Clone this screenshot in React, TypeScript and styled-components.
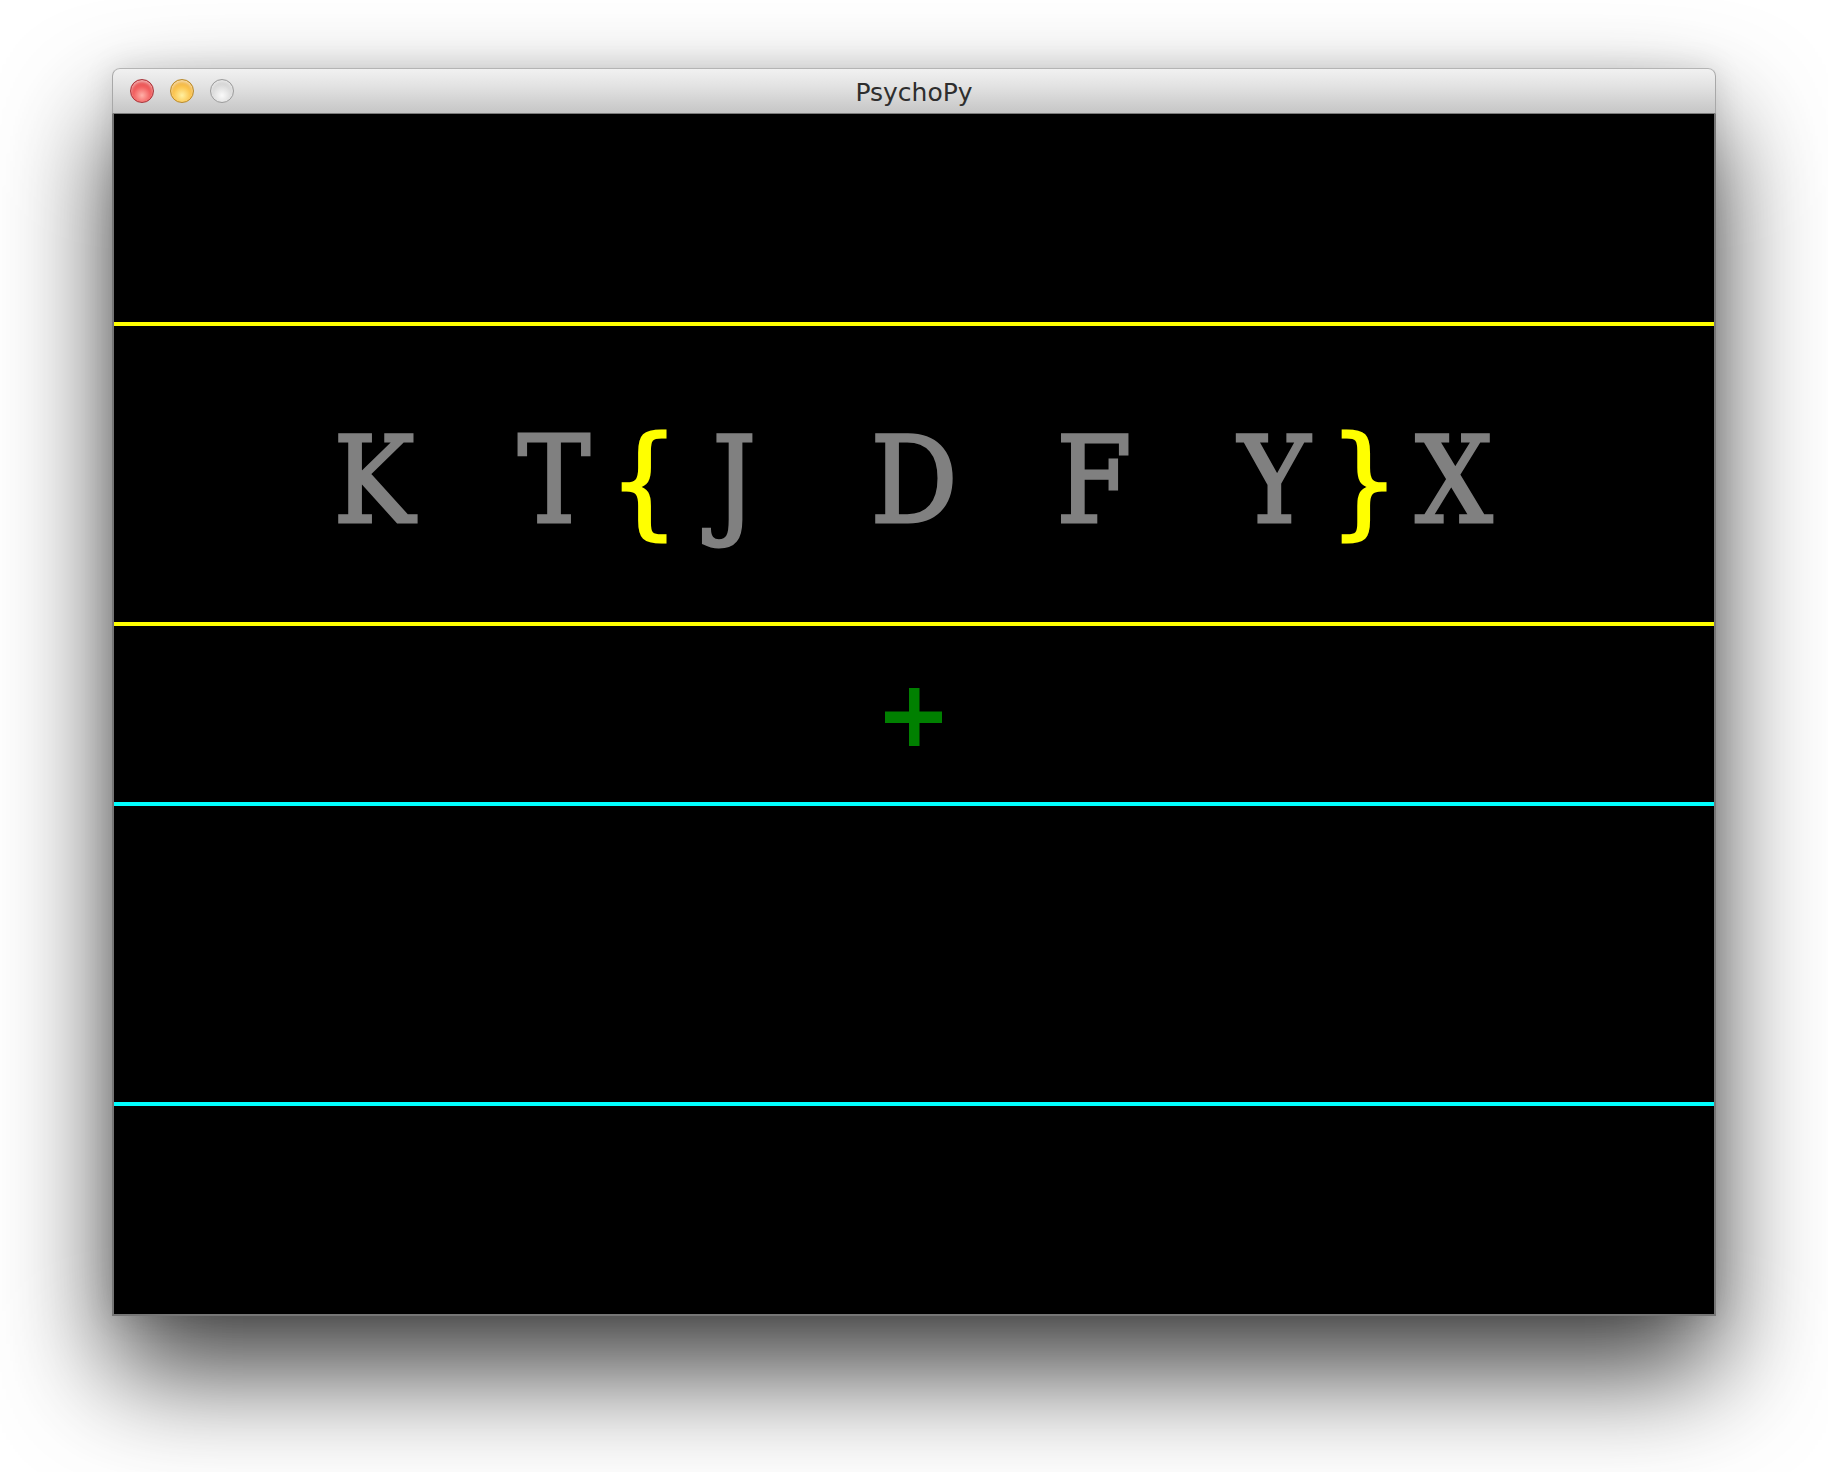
import React from 'react';
import styled, { createGlobalStyle } from 'styled-components';

const GlobalStyle = createGlobalStyle`
    html, body {
        margin: 0;
        padding: 0;
        background: #ffffff;
    }
`;

const Page = styled.div`
    width: 1828px;
    height: 1472px;
    box-sizing: border-box;
    padding: 68px 0 0 112px;
    background: #ffffff;
    overflow: hidden;
`;

const Window = styled.div`
    width: 1604px;
    display: flex;
    flex-direction: column;
    border-radius: 8px 8px 0 0;
    box-shadow: 0 56px 110px rgba(0, 0, 0, 0.75), 0 0 30px rgba(0, 0, 0, 0.12);
`;

const TitleBar = styled.div`
    height: 44px;
    position: relative;
    display: flex;
    align-items: center;
    justify-content: center;
    border-top: 1px solid #b4b4b4;
    border-bottom: 1px solid #7c7c7c;
    border-left: 1px solid #a8a8a8;
    border-right: 1px solid #a8a8a8;
    border-radius: 8px 8px 0 0;
    background: linear-gradient(#f1f1f1 0%, #e2e2e2 40%, #cfcfcf 80%, #c6c6c6 100%);
`;

const Lights = styled.div`
    position: absolute;
    left: 17px;
    top: 10px;
    display: flex;
    gap: 16px;
`;

const Light = styled.span<{ $kind: 'close' | 'min' | 'zoom' }>`
    width: 24px;
    height: 24px;
    border-radius: 50%;
    box-sizing: border-box;
    border: 1.5px solid ${p => p.$kind === 'close' ? '#a8343a' : p.$kind === 'min' ? '#b98a2a' : '#9c9c9c'};
    background: ${p => p.$kind === 'close'
        ? 'radial-gradient(circle at 50% 70%, #ffb0a8 0%, #f26060 45%, #d83a3a 100%)'
        : p.$kind === 'min'
            ? 'radial-gradient(circle at 50% 70%, #fff0a0 0%, #fbc550 45%, #e09a2a 100%)'
            : 'radial-gradient(circle at 50% 70%, #fafafa 0%, #dcdcdc 50%, #bdbdbd 100%)'};
    box-shadow: inset 0 2px 3px rgba(255, 255, 255, 0.6);
`;

const Title = styled.span`
    font-family: "DejaVu Sans", "Liberation Sans", sans-serif;
    font-size: 25px;
    color: #2e2e2e;
    margin-top: 2px;
`;

const Stage = styled.div`
    width: 1600px;
    height: 1200px;
    background: #000000;
    border: 2px solid #767676;
    border-top: none;
    display: flex;
    flex-direction: column;
`;

const Gap = styled.div<{ $h: number }>`
    height: ${p => p.$h}px;
    flex: none;
`;

const Rule = styled.div<{ $color: string }>`
    height: 4px;
    flex: none;
    background: ${p => p.$color};
`;

const LetterRow = styled.div`
    height: 296px;
    flex: none;
    box-sizing: border-box;
    padding-top: 80px;
    display: flex;
    justify-content: center;
`;

// one fixed 90px cell per character, like a monospaced typewriter face
const Cell = styled.span<{ $color: string }>`
    width: 90px;
    flex: none;
    text-align: center;
    font-family: "DejaVu Serif Condensed", "DejaVu Serif", serif;
    font-stretch: condensed;
    font-size: 120px;
    line-height: 150px;
    color: ${p => p.$color};
    -webkit-text-stroke: 3px ${p => p.$color};
`;

const FixRow = styled.div`
    height: 176px;
    flex: none;
    box-sizing: border-box;
    padding-top: 62px;
    display: flex;
    justify-content: center;
`;

const Fixation = () => (
    <svg width="58" height="58" viewBox="0 0 58 58">
        <rect x="0" y="23.5" width="57" height="11.5" fill="#008000" />
        <rect x="24" y="0" width="10.5" height="58" fill="#008000" />
    </svg>
);

const stimulus = 'K T{J D F Y}X'.split('');

export default function App() {
    return (
        <>
            <GlobalStyle />
            <Page>
                <Window>
                    <TitleBar>
                        <Lights>
                            <Light $kind="close" />
                            <Light $kind="min" />
                            <Light $kind="zoom" />
                        </Lights>
                        <Title>PsychoPy</Title>
                    </TitleBar>
                    <Stage>
                        <Gap $h={208} />
                        <Rule $color="#ffff00" />
                        <LetterRow>
                            {stimulus.map((ch, i) => (
                                <Cell key={i} $color={ch === '{' || ch === '}' ? '#ffff00' : '#808080'}>
                                    {ch === ' ' ? '\u00a0' : ch}
                                </Cell>
                            ))}
                        </LetterRow>
                        <Rule $color="#ffff00" />
                        <FixRow>
                            <Fixation />
                        </FixRow>
                        <Rule $color="#00ffff" />
                        <Gap $h={296} />
                        <Rule $color="#00ffff" />
                        <Gap $h={208} />
                    </Stage>
                </Window>
            </Page>
        </>
    );
}
